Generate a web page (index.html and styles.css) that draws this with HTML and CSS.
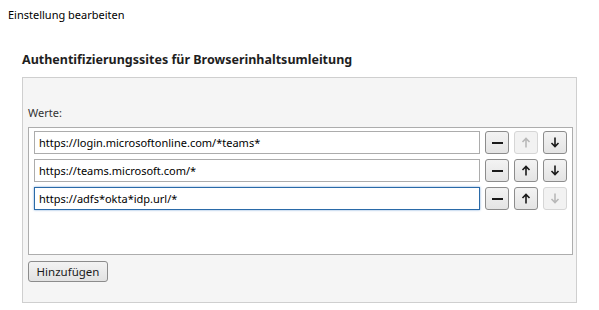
FILE: index.html
```html
<!DOCTYPE html>
<html lang="de">
<head>
    <meta charset="UTF-8">
    <title>Einstellung bearbeiten</title>
    <link rel="stylesheet" href="styles.css">
</head>
<body>

<div class="page-title">Einstellung bearbeiten</div>

<div class="setting">
    <h2>Authentifizierungssites für Browserinhaltsumleitung</h2>
    <div class="panel">
        <label class="values-label">Werte:</label>
        <div class="value-list">
            <div class="value-row">
                <input type="text" value="https://login.microsoftonline.com/*teams*">
                <button class="icon-btn" title="Entfernen"><span class="minus"></span></button>
                <button class="icon-btn" disabled><svg width="10" height="11" viewBox="0 0 10 11"><path d="M5 10.5V1.5M1.5 5L5 1.5 8.5 5" fill="none" stroke="currentColor" stroke-width="1.6"/></svg></button>
                <button class="icon-btn"><svg width="10" height="11" viewBox="0 0 10 11"><path d="M5 0.5V9.5M1.5 6L5 9.5 8.5 6" fill="none" stroke="currentColor" stroke-width="1.6"/></svg></button>
            </div>
            <div class="value-row">
                <input type="text" value="https://teams.microsoft.com/*">
                <button class="icon-btn" title="Entfernen"><span class="minus"></span></button>
                <button class="icon-btn"><svg width="10" height="11" viewBox="0 0 10 11"><path d="M5 10.5V1.5M1.5 5L5 1.5 8.5 5" fill="none" stroke="currentColor" stroke-width="1.6"/></svg></button>
                <button class="icon-btn"><svg width="10" height="11" viewBox="0 0 10 11"><path d="M5 0.5V9.5M1.5 6L5 9.5 8.5 6" fill="none" stroke="currentColor" stroke-width="1.6"/></svg></button>
            </div>
            <div class="value-row">
                <input type="text" class="focused" value="https://adfs*okta*idp.url/*">
                <button class="icon-btn" title="Entfernen"><span class="minus"></span></button>
                <button class="icon-btn"><svg width="10" height="11" viewBox="0 0 10 11"><path d="M5 10.5V1.5M1.5 5L5 1.5 8.5 5" fill="none" stroke="currentColor" stroke-width="1.6"/></svg></button>
                <button class="icon-btn" disabled><svg width="10" height="11" viewBox="0 0 10 11"><path d="M5 0.5V9.5M1.5 6L5 9.5 8.5 6" fill="none" stroke="currentColor" stroke-width="1.6"/></svg></button>
            </div>
        </div>
        <button class="add-btn">Hinzufügen</button>
    </div>
</div>

</body>
</html>
```

FILE: styles.css
```css
body {
    font-family: "Noto Sans", "Open Sans", sans-serif;
    font-size: 11px;
    color: #000;
    background-color: #fff;
    margin: 0;
}
.page-title {
    padding: 6px 8px 0;
    line-height: 18px;
}
.setting {
    padding: 0 22px 0 22px;
}
h2 {
    font-size: 12.5px;
    font-weight: bold;
    color: #1e1e1e;
    margin: 0;
    padding-top: 27px;
    line-height: 18px;
    height: 26px;
}
.panel {
    width: 548px;
    height: 224px;
    background-color: #f5f5f5;
    border: 1px solid #cfcfcf;
    padding: 0 0 0 5px;
}
.values-label {
    display: block;
    color: #333;
    padding-top: 26px;
    line-height: 18px;
    margin-bottom: 5px;
}
.value-list {
    background-color: #fff;
    border: 1px solid #adadad;
    width: 533px;
    height: 118px;
    padding: 3px 5px 5px 5px;
    display: flex;
    flex-direction: column;
    gap: 5px;
}
.value-row {
    display: flex;
    gap: 5px;
    height: 23px;
}
input {
    flex: 1;
    font-family: inherit;
    font-size: 11px;
    height: 23px;
    box-sizing: border-box;
    border: 1px solid #acacac;
    padding: 0 4px;
    color: #000;
    outline: none;
}
input.focused {
    border-color: #2a6aa8;
    box-shadow: 0 0 2px rgba(60, 127, 200, 0.7);
}
.icon-btn {
    width: 24px;
    height: 23px;
    padding: 0;
    border: 1px solid #8c8c8c;
    border-radius: 3px;
    background: linear-gradient(#f3f3f3, #e4e4e4);
    color: #1a1a1a;
    display: flex;
    align-items: center;
    justify-content: center;
}
.icon-btn:disabled {
    border-color: #d6d6d6;
    background: #f2f2f2;
    color: #b8b8b8;
}
.minus {
    width: 11px;
    height: 2px;
    background-color: #1a1a1a;
}
.add-btn {
    margin-top: 6px;
    width: 80px;
    height: 21px;
    font-family: inherit;
    font-size: 11.5px;
    color: #1a1a1a;
    border: 1px solid #8c8c8c;
    border-radius: 3px;
    background: linear-gradient(#f3f3f3, #e2e2e2);
    padding: 0;
}
```
